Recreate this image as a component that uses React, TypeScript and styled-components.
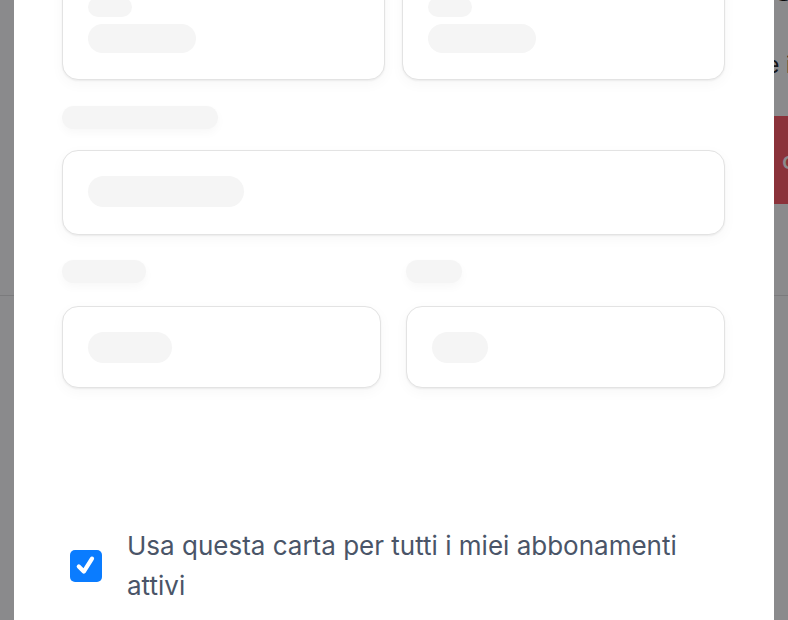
import { useLayoutEffect, useRef } from 'react';
import styled, { createGlobalStyle } from 'styled-components';

const GlobalStyle = createGlobalStyle`
  html, body {
    margin: 0;
    height: 100%;
    overflow: hidden;
    background: #ffffff;
    font-family: Inter, "Noto Sans", "Liberation Sans", sans-serif;
  }
  #root {
    height: 100%;
  }
`;

const App = () => {
  const modalRef = useRef<HTMLDivElement>(null);
  const firstRowRef = useRef<HTMLDivElement>(null);

  // the modal is shown scrolled down, with the first row of cards half gone
  useLayoutEffect(() => {
    if (modalRef.current && firstRowRef.current) {
      modalRef.current.scrollTop = firstRowRef.current.offsetTop + 29;
    }
  }, []);

  return (
    <>
      <GlobalStyle />
      <Page>
        <PageTitle>Gestione abbonamento</PageTitle>
        <PageSubtitle>e iscrizioni attive</PageSubtitle>
        <DangerButton>cancella</DangerButton>
        <PageHeaderEnd />
      </Page>

      <Backdrop>
        <Modal ref={modalRef}>
          <ModalTitle>Aggiungi una carta</ModalTitle>
          <TopRow ref={firstRowRef}>
            <FieldCard $padBottom={26}>
              <CardStack>
                <Bone $width={44} $height={20} />
                <Bone $width={108} $height={29} />
              </CardStack>
            </FieldCard>
            <FieldCard $padBottom={26}>
              <CardStack>
                <Bone $width={44} $height={20} />
                <Bone $width={108} $height={29} />
              </CardStack>
            </FieldCard>
          </TopRow>

          <Field $gap={21}>
            <LabelBone $width={156} />
            <FieldCard $padBottom={27}>
              <Bone $width={156} $height={31} />
            </FieldCard>
          </Field>

          <SplitRow>
            <Field $gap={23}>
              <LabelBone $width={84} />
              <FieldCard $padBottom={24}>
                <Bone $width={84} $height={31} />
              </FieldCard>
            </Field>
            <Field $gap={23}>
              <LabelBone $width={56} />
              <FieldCard $padBottom={24}>
                <Bone $width={56} $height={31} />
              </FieldCard>
            </Field>
          </SplitRow>

          <CheckRow>
            <CheckBox role="checkbox" aria-checked="true">
              <svg width="32" height="32" viewBox="0 0 32 32" fill="none">
                <path
                  d="M8.8 16.6L13.8 21.6L22 8.6"
                  stroke="#ffffff"
                  strokeWidth="4.2"
                  strokeLinecap="round"
                  strokeLinejoin="round"
                />
              </svg>
            </CheckBox>
            <CheckLabel>Usa questa carta per tutti i miei abbonamenti attivi</CheckLabel>
          </CheckRow>

          <ModalFooter />
        </Modal>
      </Backdrop>
    </>
  );
};

const Page = styled.div`
  height: 100%;
  display: flex;
  flex-direction: column;
  overflow: hidden;
`;

const PageTitle = styled.div`
  margin: -25px 0 0 772px;
  font-size: 30px;
  line-height: 30px;
  font-weight: 700;
  color: #111111;
  white-space: nowrap;
`;

const PageSubtitle = styled.div`
  margin: 47px 0 0 766px;
  font-size: 23px;
  line-height: 26px;
  color: #2b2b2b;
  white-space: nowrap;
`;

const DangerButton = styled.div`
  margin: 38px 0 0 774px;
  height: 88px;
  width: 200px;
  flex-shrink: 0;
  display: flex;
  align-items: center;
  padding-left: 8px;
  box-sizing: border-box;
  background: #ff5d68;
  color: #ffffff;
  font-size: 24px;
  font-weight: 500;
`;

const PageHeaderEnd = styled.div`
  margin-top: 91px;
  border-bottom: 1px solid #e4e4e4;
`;

const Backdrop = styled.div`
  position: fixed;
  inset: 0;
  display: flex;
  justify-content: center;
  background: rgba(0, 0, 4, 0.46);
`;

const Modal = styled.div`
  width: 760px;
  height: 100%;
  box-sizing: border-box;
  padding: 40px 49px 0 48px;
  background: #ffffff;
  overflow-y: auto;
  scrollbar-width: none;
  &::-webkit-scrollbar {
    display: none;
  }
`;

const ModalTitle = styled.div`
  font-size: 26px;
  font-weight: 600;
  color: #1f2937;
  margin-bottom: 40px;
`;

const TopRow = styled.div`
  display: grid;
  grid-template-columns: 1fr 1fr;
  gap: 17px;
`;

const SplitRow = styled.div`
  display: grid;
  grid-template-columns: 1fr 1fr;
  gap: 25px;
  margin-top: 25px;
`;

const Field = styled.div<{ $gap: number }>`
  display: flex;
  flex-direction: column;
  align-items: stretch;
  gap: ${({ $gap }) => $gap}px;
  margin-top: 26px;

  ${SplitRow} & {
    margin-top: 0;
  }
`;

const FieldCard = styled.div<{ $padBottom: number }>`
  border: 1px solid #e3e3e3;
  border-radius: 16px;
  padding: 25px 25px ${({ $padBottom }) => $padBottom}px;
  background: #ffffff;
  box-shadow: 0 1px 2px rgba(0, 0, 0, 0.06), 0 4px 14px rgba(0, 0, 0, 0.035);
`;

const CardStack = styled.div`
  display: flex;
  flex-direction: column;
  gap: 7px;
`;

const Bone = styled.div<{ $width: number; $height: number }>`
  width: ${({ $width }) => $width}px;
  height: ${({ $height }) => $height}px;
  border-radius: 999px;
  background: #f5f5f5;
`;

const LabelBone = styled.div<{ $width: number }>`
  width: ${({ $width }) => $width}px;
  height: 23px;
  border-radius: 999px;
  background: #f5f5f5;
  box-shadow: 0 4px 10px rgba(0, 0, 0, 0.03);
`;

const CheckRow = styled.div`
  display: flex;
  align-items: center;
  gap: 25px;
  margin-top: 138px;
  padding-left: 8px;
`;

const CheckBox = styled.span`
  flex-shrink: 0;
  width: 32px;
  height: 32px;
  border-radius: 5px;
  background: #0a7cff;
  display: flex;
  align-items: center;
  justify-content: center;
`;

const CheckLabel = styled.div`
  font-size: 26px;
  line-height: 40px;
  color: #4a5568;
`;

const ModalFooter = styled.div`
  height: 200px;
`;

export default App;
